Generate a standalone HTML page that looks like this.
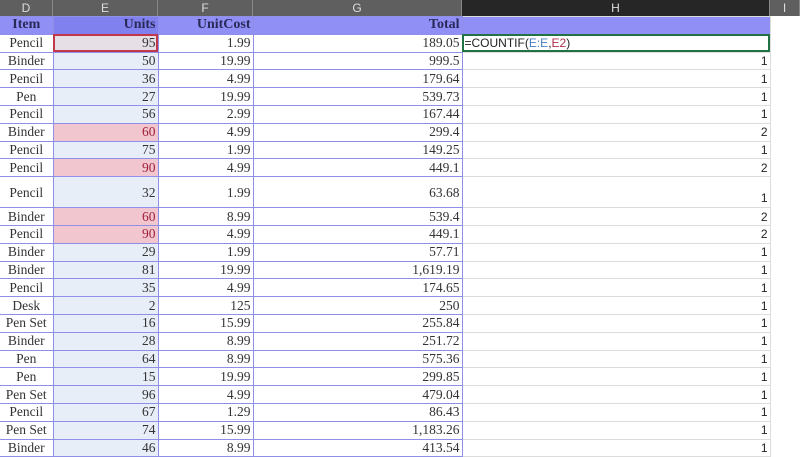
<!DOCTYPE html>
<html><head><style>
body{margin:0;width:800px;height:446px;overflow:hidden;background:#fff;font-family:"Liberation Serif",serif;font-size:13.5px;color:#333;position:relative}
.hd{position:absolute;top:0;height:16px;background:#5f5f5f;color:#ddd;font-family:"Liberation Sans",sans-serif;font-size:12px;line-height:16px;text-align:center;border-right:1px solid #888;box-sizing:border-box}
table{position:absolute;top:16px;left:0;border-collapse:collapse;table-layout:fixed}
td{padding:0 2px;height:16.8px;line-height:16px;border:1px solid #8f8fe8;white-space:nowrap;overflow:hidden}
td.d{text-align:center;border-left:none}
td.e{text-align:right;background:#e8eef8}
td.f,td.g{text-align:right}
td.h{text-align:right;border-color:#dcdcdc;font-family:"Liberation Sans",sans-serif;font-size:12px;color:#222}
td.i{border:none;border-left:1px solid #dcdcdc}
tr.hr td{background:#8f8ff5;font-weight:bold;color:#2a2a5a;font-size:14px}
tr.hr td.i{background:#fff}
.r{background:#f2c6cf!important;color:#a0203a}
tr.tall td{height:30px;vertical-align:bottom;line-height:17px}
tr.tall td.d,tr.tall td.e,tr.tall td.f,tr.tall td.g{vertical-align:middle}
</style></head><body>
<div class="hd" style="left:0;width:53px">D</div>
<div class="hd" style="left:53px;width:105px">E</div>
<div class="hd" style="left:158px;width:95px">F</div>
<div class="hd" style="left:253px;width:209px">G</div>
<div class="hd" style="left:462px;width:308px;background:#262626">H</div>
<div class="hd" style="left:770px;width:30px">I</div>
<table>
<colgroup><col style="width:53px"><col style="width:105px"><col style="width:95px"><col style="width:209px"><col style="width:308px"><col style="width:30px"></colgroup>
<tr class="hr"><td class="d">Item</td><td class="e" style="background:#8080ee">Units</td><td class="f">UnitCost</td><td class="g">Total</td><td class="h"></td><td class="i"></td></tr>
<tr><td class="d">Pencil</td><td class="e" style="background:#e6dfe6;outline:2px solid #c0394b;outline-offset:-2px">95</td><td class="f">1.99</td><td class="g">189.05</td><td class="h" style="text-align:left;outline:2px solid #217346;outline-offset:-2px">=COUNTIF(<span style="color:#4a7fc0">E:E</span>,<span style="color:#b0304a">E2</span>)</td><td class="i"></td></tr>
<tr><td class="d">Binder</td><td class="e">50</td><td class="f">19.99</td><td class="g">999.5</td><td class="h">1</td><td class="i"></td></tr>
<tr><td class="d">Pencil</td><td class="e">36</td><td class="f">4.99</td><td class="g">179.64</td><td class="h">1</td><td class="i"></td></tr>
<tr><td class="d">Pen</td><td class="e">27</td><td class="f">19.99</td><td class="g">539.73</td><td class="h">1</td><td class="i"></td></tr>
<tr><td class="d">Pencil</td><td class="e">56</td><td class="f">2.99</td><td class="g">167.44</td><td class="h">1</td><td class="i"></td></tr>
<tr><td class="d">Binder</td><td class="e r">60</td><td class="f">4.99</td><td class="g">299.4</td><td class="h">2</td><td class="i"></td></tr>
<tr><td class="d">Pencil</td><td class="e">75</td><td class="f">1.99</td><td class="g">149.25</td><td class="h">1</td><td class="i"></td></tr>
<tr><td class="d">Pencil</td><td class="e r">90</td><td class="f">4.99</td><td class="g">449.1</td><td class="h">2</td><td class="i"></td></tr>
<tr class="tall"><td class="d">Pencil</td><td class="e">32</td><td class="f">1.99</td><td class="g">63.68</td><td class="h">1</td><td class="i"></td></tr>
<tr><td class="d">Binder</td><td class="e r">60</td><td class="f">8.99</td><td class="g">539.4</td><td class="h">2</td><td class="i"></td></tr>
<tr><td class="d">Pencil</td><td class="e r">90</td><td class="f">4.99</td><td class="g">449.1</td><td class="h">2</td><td class="i"></td></tr>
<tr><td class="d">Binder</td><td class="e">29</td><td class="f">1.99</td><td class="g">57.71</td><td class="h">1</td><td class="i"></td></tr>
<tr><td class="d">Binder</td><td class="e">81</td><td class="f">19.99</td><td class="g">1,619.19</td><td class="h">1</td><td class="i"></td></tr>
<tr><td class="d">Pencil</td><td class="e">35</td><td class="f">4.99</td><td class="g">174.65</td><td class="h">1</td><td class="i"></td></tr>
<tr><td class="d">Desk</td><td class="e">2</td><td class="f">125</td><td class="g">250</td><td class="h">1</td><td class="i"></td></tr>
<tr><td class="d">Pen Set</td><td class="e">16</td><td class="f">15.99</td><td class="g">255.84</td><td class="h">1</td><td class="i"></td></tr>
<tr><td class="d">Binder</td><td class="e">28</td><td class="f">8.99</td><td class="g">251.72</td><td class="h">1</td><td class="i"></td></tr>
<tr><td class="d">Pen</td><td class="e">64</td><td class="f">8.99</td><td class="g">575.36</td><td class="h">1</td><td class="i"></td></tr>
<tr><td class="d">Pen</td><td class="e">15</td><td class="f">19.99</td><td class="g">299.85</td><td class="h">1</td><td class="i"></td></tr>
<tr><td class="d">Pen Set</td><td class="e">96</td><td class="f">4.99</td><td class="g">479.04</td><td class="h">1</td><td class="i"></td></tr>
<tr><td class="d">Pencil</td><td class="e">67</td><td class="f">1.29</td><td class="g">86.43</td><td class="h">1</td><td class="i"></td></tr>
<tr><td class="d">Pen Set</td><td class="e">74</td><td class="f">15.99</td><td class="g">1,183.26</td><td class="h">1</td><td class="i"></td></tr>
<tr><td class="d">Binder</td><td class="e">46</td><td class="f">8.99</td><td class="g">413.54</td><td class="h">1</td><td class="i"></td></tr>
</table>
</body></html>
